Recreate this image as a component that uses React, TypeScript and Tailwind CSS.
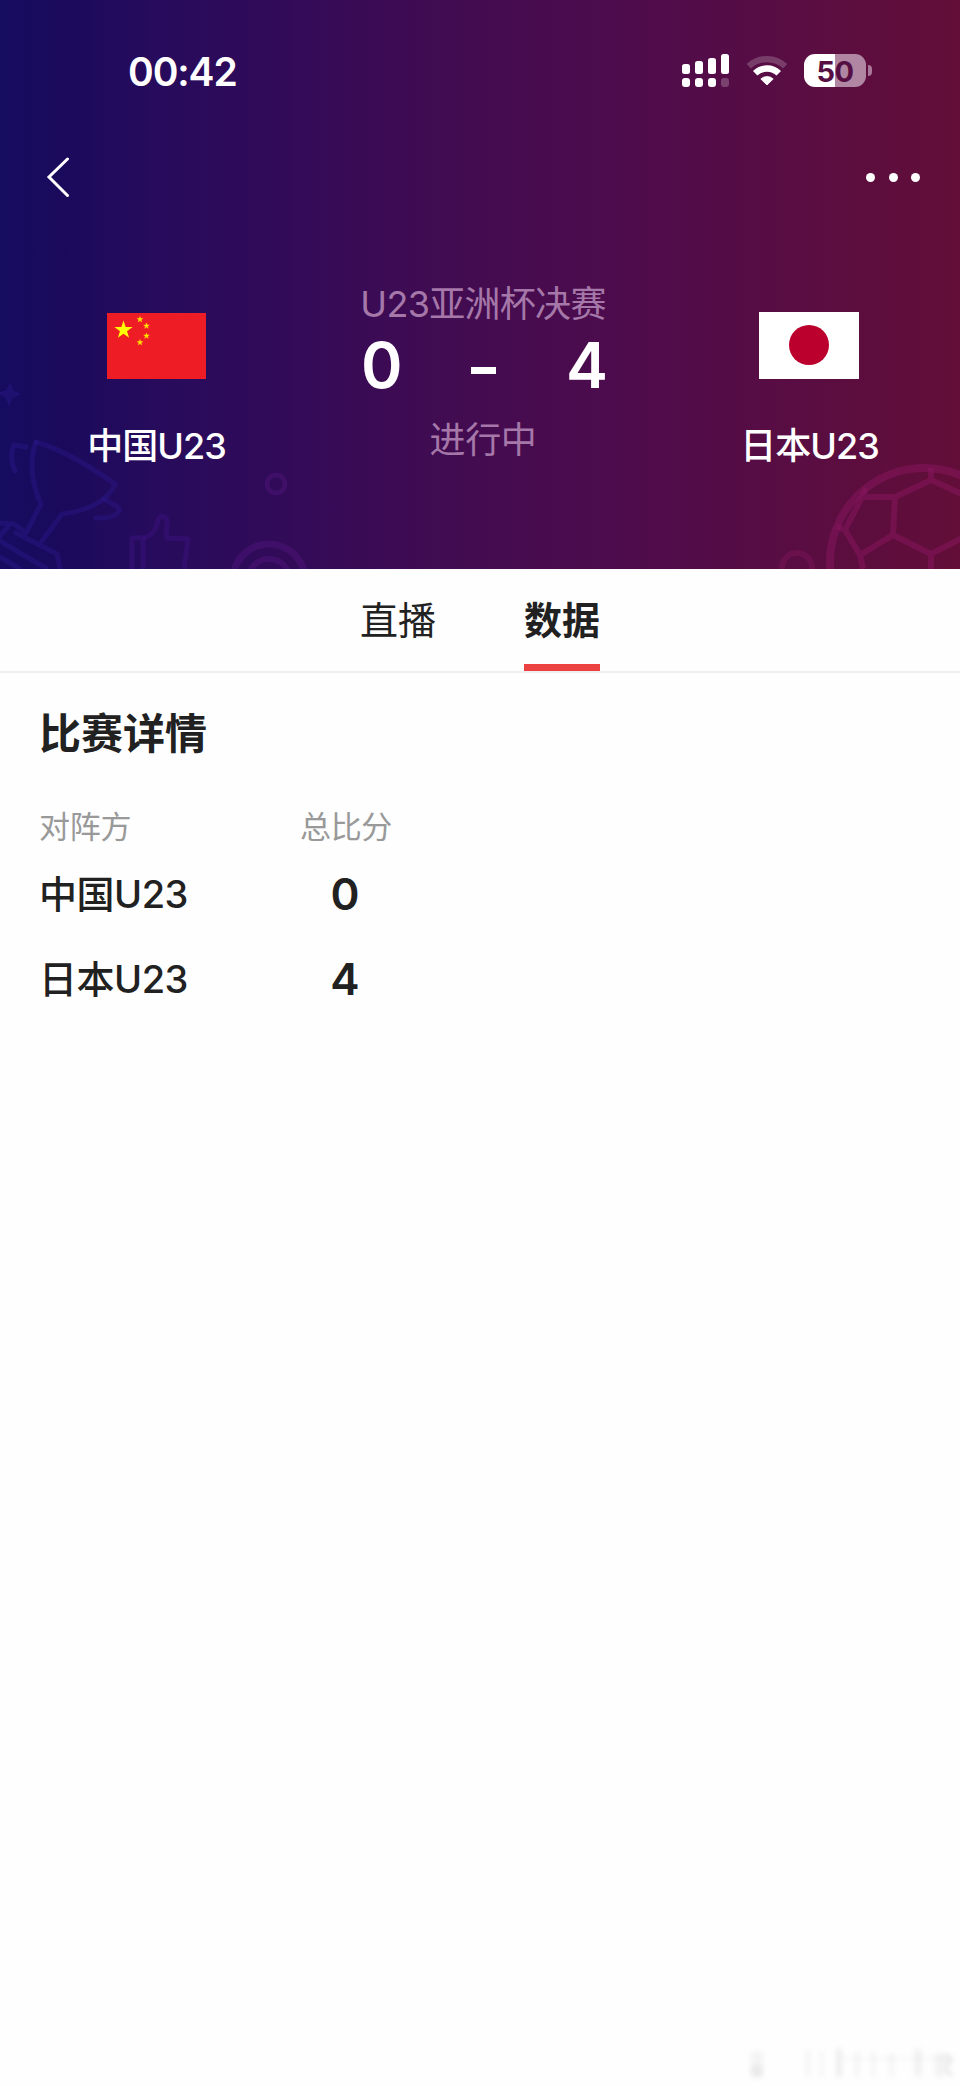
import React, { useState } from 'react';

const tabs = [
  { key: 'live', label: '直播' },
  { key: 'data', label: '数据' },
];

const teams = [
  { id: 1, name: '中国U23', score: 0 },
  { id: 2, name: '日本U23', score: 4 },
];

const smallStars = [
  { x: 33, y: 6.5, r: 2.9 },
  { x: 39.5, y: 13, r: 2.9 },
  { x: 39.5, y: 23, r: 2.9 },
  { x: 33, y: 29.5, r: 2.9 },
];

const starPoints = (cx: number, cy: number, r: number) =>
  Array.from({ length: 10 }, (_, i) => {
    const radius = i % 2 === 0 ? r : r * 0.385;
    const angle = (Math.PI / 5) * i - Math.PI / 2;
    return `${cx + radius * Math.cos(angle)},${cy + radius * Math.sin(angle)}`;
  }).join(' ');

const ChinaFlag: React.FC = () => (
  <svg width="99" height="66" viewBox="0 0 99 66">
    <rect width="99" height="66" fill="#ee1c25" />
    <polygon points={starPoints(16.5, 17, 9.6)} fill="#ffff00" />
    {smallStars.map((s) => (
      <polygon
        key={`${s.x}-${s.y}`}
        points={starPoints(s.x, s.y, s.r)}
        fill="#ffe600"
        stroke="#ffe600"
        strokeWidth="0.5"
      />
    ))}
  </svg>
);

const JapanFlag: React.FC = () => (
  <svg width="100" height="67" viewBox="0 0 100 67">
    <rect width="100" height="67" fill="#fff" />
    <circle cx="50" cy="33" r="20" fill="#bc002d" />
  </svg>
);

const SignalIcon: React.FC = () => (
  <svg width="47" height="33" viewBox="0 0 47 33" fill="#fff">
    <rect x="0" y="10" width="8" height="10" rx="2.5" />
    <rect x="13" y="7" width="8" height="13" rx="2.5" />
    <rect x="26" y="4" width="8" height="16" rx="2.5" />
    <rect x="39" y="0" width="8" height="20" rx="2.5" />
    <rect x="0" y="24" width="8" height="9" rx="3" />
    <rect x="13" y="24" width="8" height="9" rx="3" />
    <rect x="26" y="24" width="8" height="9" rx="3" />
    <rect x="39" y="24" width="8" height="9" rx="3" opacity="0.22" />
  </svg>
);

const WifiIcon: React.FC = () => (
  <svg width="42" height="33" viewBox="0 0 42 33" fill="none" stroke="#fff">
    <path d="M2.8 12.2A26.7 26.7 0 0 1 39.2 12.2" strokeWidth="6.2" opacity="0.2" />
    <path d="M9.2 19.3A17 17 0 0 1 32.8 19.3" strokeWidth="6.4" />
    <path d="M21 31L14.8 25A9 9 0 0 1 27.2 25Z" fill="#fff" strokeWidth="0.8" strokeLinejoin="round" />
  </svg>
);

const Battery: React.FC = () => (
  <div className="flex items-center">
    <div className="flex h-[33px] w-[62px] items-center justify-center rounded-[11px] bg-[linear-gradient(90deg,#fff_50%,#b086a3_50%)] pt-px text-[29px] font-bold leading-none tracking-[-0.6px] text-[#560f42]">
      50
    </div>
    <div className="ml-[2px] h-[11px] w-[4px] rounded-r-full bg-[#a87898]" />
  </div>
);

// faint trophy, thumb and football line art along the bottom of the header
const HeaderPattern: React.FC = () => (
  <svg className="absolute inset-0 blur-[0.6px]" width="960" height="569" viewBox="0 0 960 569" fill="none">
    <g stroke="#2a1785" strokeOpacity="0.48" strokeWidth="5" strokeLinejoin="round" strokeLinecap="round">
      <path d="M10 384L13 391L20 394L12 397L9 405L6 397L-2 393L6 391Z" fill="#2a1785" fillOpacity="0.45" strokeWidth="1" />
      <path d="M15 471C10 460 11 450 14 445L26 447" />
      <path d="M36 442C60 449 91 467 115 484C109 500 88 511 62 514L42 541" />
      <path d="M36 442C29 460 32 485 41 504L26 533L14 524L0 523" />
      <path d="M104 499C114 505 121 507 119 511C115 518 105 518 96 518" />
      <path d="M16 533L57 554L60 569M0 541L47 569M0 557L20 569M8 527L-2 538" />
    </g>
    <g stroke="#41148a" strokeOpacity="0.38" strokeWidth="5" strokeLinejoin="round">
      <path d="M132 569V538H143V569" />
      <path d="M143 538C153 536 157 527 158 520C160 515 166 515 167 521C168 528 165 534 167 538L188 539L184 569" />
    </g>
    <g stroke="#571683" strokeOpacity="0.4">
      <circle cx="276" cy="484" r="9" strokeWidth="4.5" />
      <circle cx="269" cy="580" r="36" strokeWidth="7" />
      <circle cx="269" cy="580" r="21" strokeWidth="6" />
    </g>
    <g stroke="#8a1660" strokeOpacity="0.5" strokeWidth="6" strokeLinejoin="round">
      <circle cx="797" cy="568" r="15" strokeOpacity="0.35" />
      <circle cx="924" cy="562" r="94" strokeWidth="8" />
      <path d="M862 497H895L931 480L962 494M931 480V468M862 497L845 530L860 555L893 535L931 554L962 538M895 497L893 535M931 554V569M860 555L863 569M862 497L866 488M845 530L836 526" />
    </g>
  </svg>
);

// washed-out mark in the page corner
const CornerMark: React.FC = () => (
  <svg width="212" height="36" viewBox="0 0 212 36" className="blur-[2.5px]" fill="#777">
    <rect x="8" y="6" width="12" height="26" opacity="0.07" />
    <rect x="8" y="20" width="12" height="12" opacity="0.08" />
    <rect x="62" y="4" width="6" height="28" opacity="0.06" />
    <rect x="76" y="6" width="5" height="26" opacity="0.05" />
    <rect x="93" y="4" width="6" height="28" opacity="0.12" />
    <rect x="111" y="6" width="6" height="26" opacity="0.06" />
    <rect x="128" y="6" width="5" height="26" opacity="0.06" />
    <rect x="145" y="8" width="7" height="24" opacity="0.05" />
    <rect x="171" y="4" width="8" height="28" opacity="0.09" />
    <rect x="192" y="8" width="10" height="24" opacity="0.08" />
    <rect x="100" y="12" width="104" height="3" opacity="0.05" />
    <path d="M202 11c8 0 8 8 0 8M202 24c4 0 5 4 6 7" fill="none" stroke="#777" strokeWidth="2" opacity="0.3" />
  </svg>
);

const App: React.FC = () => {
  const [activeTab, setActiveTab] = useState('data');

  return (
    <div className="flex h-[2086px] w-[960px] flex-col bg-[#fefefe] font-['Inter','Noto_Sans_CJK_SC',sans-serif] text-[#212121]">
      <header className="relative h-[569px] shrink-0 overflow-hidden bg-[linear-gradient(90deg,#150c60_0%,#1b0a5c_7%,#270b5c_16%,#300b59_28%,#3a0b55_38%,#430c50_49%,#4e0c4c_66%,#590d42_83%,#620e38_100%)] text-white">
        <HeaderPattern />
        <div className="relative">
          <div className="flex h-[141px] items-center pl-[128px] pr-[88px]">
            <span className="pt-px text-[39px] font-semibold leading-none tracking-[-1.1px]">00:42</span>
            <div className="ml-auto flex items-center">
              <SignalIcon />
              <div className="ml-[17px] mr-[16px]">
                <WifiIcon />
              </div>
              <Battery />
            </div>
          </div>

          <div className="flex h-[72px] items-center justify-between pl-[46px] pr-[40px]">
            <button aria-label="back">
              <svg width="24" height="40" viewBox="0 0 24 40" fill="none" stroke="#fff" strokeWidth="3">
                <path d="M21.5 2L3 20L21.5 38.5" strokeLinecap="round" />
              </svg>
            </button>
            <button aria-label="more" className="flex gap-[13.4px]">
              <span className="size-[9px] rounded-full bg-white" />
              <span className="size-[9px] rounded-full bg-white" />
              <span className="size-[9px] rounded-full bg-white" />
            </button>
          </div>

          <div className="flex justify-between pt-[65px]">
            <div className="flex w-[313px] flex-col items-center pt-[35px]">
              <ChinaFlag />
              <span className="mt-[43px] text-[36px] font-medium leading-[48px] tracking-[-1px]">中国U23</span>
            </div>
            <div className="flex flex-1 flex-col items-center pr-[4px] pt-[2px]">
              <p className="whitespace-nowrap text-[36px] leading-[48px] tracking-[-0.7px] text-[#a578a9]">U23亚洲杯决赛</p>
              <div className="mt-[5px] flex w-[244px] items-center justify-between text-[63px] font-semibold leading-[64px]">
                <span className="w-[39px] tracking-[-2px]">0</span>
                <span className="mt-[10px] h-[7px] w-[25px] bg-white" />
                <span className="w-[39px]">4</span>
              </div>
              <p className="mt-[19px] text-[36px] leading-[48px] tracking-[-0.4px] text-[#a578a9]">进行中</p>
            </div>
            <div className="flex w-[303px] flex-col items-center pt-[34px]">
              <JapanFlag />
              <span className="ml-[2px] mt-[43px] text-[36px] font-medium leading-[48px] tracking-[-1px]">日本U23</span>
            </div>
          </div>
        </div>
      </header>

      <nav className="flex h-[104px] shrink-0 justify-center gap-[88px] border-b-2 border-[#efefef]">
        {tabs.map((tab) => (
          <button
            key={tab.key}
            onClick={() => setActiveTab(tab.key)}
            className={`h-[102px] border-b-[7px] pt-[7px] text-[38px] leading-none ${
              activeTab === tab.key ? 'border-[#eb4141] font-bold' : 'border-transparent'
            }`}
          >
            {tab.label}
          </button>
        ))}
      </nav>

      <main className="flex flex-1 flex-col pl-[39px]">
        <h2 className="mt-[33px] text-[42px] font-bold leading-[56px]">比赛详情</h2>
        <div className="mt-[45px] grid w-[358px] grid-cols-[256px_102px] text-[31px] leading-[40px] tracking-[-0.3px] text-[#999]">
          <span>对阵方</span>
          <span className="text-center">总比分</span>
        </div>
        <div className="mt-[4px]">
          {teams.map((team) => (
            <div key={team.id} className="grid h-[85px] w-[356px] grid-cols-[256px_100px] items-center">
              <span className="text-[38px] font-medium leading-none tracking-[-0.5px]">{team.name}</span>
              <span className="text-center text-[44px] font-semibold leading-none">{team.score}</span>
            </div>
          ))}
        </div>
        <div className="mt-auto flex justify-end pb-[5px] pr-[5px]">
          <CornerMark />
        </div>
      </main>
    </div>
  );
};

export default App;
